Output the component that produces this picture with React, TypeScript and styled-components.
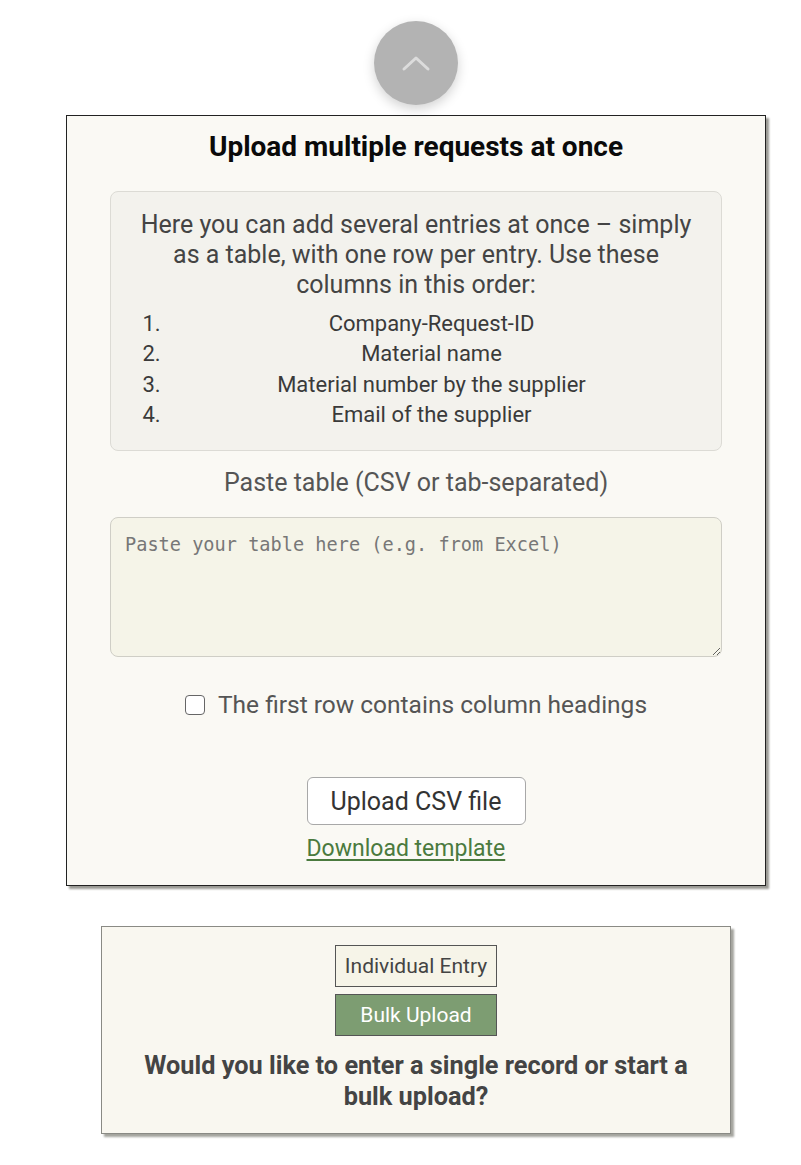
import React, { useState } from "react";
import styled, { createGlobalStyle } from "styled-components";

const GlobalStyle = createGlobalStyle`
  html, body {
    margin: 0;
    padding: 0;
    background: #ffffff;
    font-family: Roboto, "Liberation Sans", Arial, sans-serif;
  }
`;

const Page = styled.div`
  display: flex;
  flex-direction: column;
  align-items: center;
  padding: 21px 0 30px 31px;
`;

const ScrollTopButton = styled.button`
  width: 84px;
  height: 84px;
  border-radius: 50%;
  border: none;
  background: #b3b3b3;
  box-shadow: 0 4px 12px rgba(0, 0, 0, 0.18);
  display: flex;
  align-items: center;
  justify-content: center;
  padding: 0;
  cursor: pointer;
  position: relative;
  z-index: 1;
`;

const Card = styled.section`
  box-sizing: border-box;
  width: 700px;
  margin-top: 10px;
  padding: 16px 43px 23px;
  background: #faf9f4;
  border: 1px solid #222;
  box-shadow: 3px 3px 2px #9a9a94;
  display: flex;
  flex-direction: column;
  align-items: center;
`;

const Title = styled.h2`
  margin: 0 0 29px;
  font-size: 28px;
  line-height: 30px;
  font-weight: 700;
  color: #0a0a0a;
  text-align: center;
`;

const InfoBox = styled.div`
  box-sizing: border-box;
  width: 100%;
  padding: 18px 24px 20px;
  background: #f3f2ed;
  border: 1px solid #dcdbd5;
  border-radius: 8px;
  color: #444;
  text-align: center;
`;

const InfoText = styled.p`
  margin: 0 0 9px;
  font-size: 25px;
  line-height: 30px;
`;

const ColumnList = styled.ol`
  margin: 0;
  padding-left: 31px;
  font-size: 22px;
  line-height: 30.3px;
  color: #3a3a3a;
`;

const Label = styled.label`
  margin-top: 17px;
  font-size: 25px;
  line-height: 30px;
  color: #555;
`;

const PasteArea = styled.textarea`
  box-sizing: border-box;
  width: 100%;
  height: 140px;
  margin-top: 19px;
  padding: 15px 14px;
  background: #f5f4e8;
  border: 1px solid #cfcec6;
  border-radius: 8px;
  font-family: "DejaVu Sans Mono", "Liberation Mono", monospace;
  font-size: 18.6px;
  line-height: 24px;
  color: #333;
  resize: vertical;

  &::placeholder {
    color: #777;
  }
`;

const CheckRow = styled.label`
  margin-top: 33px;
  display: flex;
  align-items: center;
  gap: 13px;
  font-size: 24.5px;
  line-height: 30px;
  color: #555;
  cursor: pointer;
`;

const CheckBox = styled.input`
  width: 20px;
  height: 20px;
  margin: 0;
  appearance: none;
  border: 1.5px solid #666;
  border-radius: 4px;
  background: #fff;
  cursor: pointer;

  &:checked {
    background: #7d9d72;
  }
`;

const Actions = styled.div`
  margin-top: 57px;
  display: flex;
  flex-direction: column;
  align-items: flex-start;
  gap: 11px;
`;

const UploadButton = styled.button`
  width: 219px;
  height: 48px;
  background: #ffffff;
  border: 1px solid #a8a8a8;
  border-radius: 6px;
  font-family: inherit;
  font-size: 25px;
  color: #333;
  cursor: pointer;
`;

const TemplateLink = styled.a`
  font-size: 23px;
  line-height: 26px;
  color: #4a7a3e;
  text-decoration: underline;
  text-underline-offset: 3px;
`;

const ModeCard = styled.section`
  box-sizing: border-box;
  width: 630px;
  margin-top: 40px;
  padding: 18px 40px 21px;
  background: #f9f7f0;
  border: 1px solid #8a8a85;
  box-shadow: 3px 3px 2px #a4a49e;
  display: flex;
  flex-direction: column;
  align-items: center;
  gap: 7px;
`;

const ModeButton = styled.button<{ $active?: boolean }>`
  width: 162px;
  height: 42px;
  border: 1px solid #555;
  border-radius: 0;
  background: ${(p) => (p.$active ? "#7d9d72" : "#f6f4e8")};
  color: ${(p) => (p.$active ? "#ffffff" : "#444")};
  font-family: Roboto, "Liberation Sans", Arial, sans-serif;
  font-size: 21px;
  padding: 0;
  cursor: pointer;
`;

const Question = styled.h3`
  margin: 7px 0 0;
  font-size: 25.3px;
  line-height: 31px;
  font-weight: 700;
  color: #444;
  text-align: center;
`;

const columns = [
  "Company-Request-ID",
  "Material name",
  "Material number by the supplier",
  "Email of the supplier",
];

export default function App() {
  const [mode, setMode] = useState<"single" | "bulk">("bulk");
  const [hasHeader, setHasHeader] = useState(false);

  return (
    <Page>
      <GlobalStyle />
      <ScrollTopButton aria-label="Scroll to top">
        <svg width="30" height="20" viewBox="0 0 30 20">
          <path
            d="M3 16 L15 5 L27 16"
            fill="none"
            stroke="#dcdcdc"
            strokeWidth="3"
            strokeLinecap="round"
            strokeLinejoin="round"
          />
        </svg>
      </ScrollTopButton>

      <Card>
        <Title>Upload multiple requests at once</Title>
        <InfoBox>
          <InfoText>
            Here you can add several entries at once – simply as a table, with
            one row per entry. Use these columns in this order:
          </InfoText>
          <ColumnList>
            {columns.map((c) => (
              <li key={c}>{c}</li>
            ))}
          </ColumnList>
        </InfoBox>
        <Label htmlFor="paste">Paste table (CSV or tab-separated)</Label>
        <PasteArea id="paste" placeholder="Paste your table here (e.g. from Excel)" />
        <CheckRow>
          <CheckBox
            type="checkbox"
            checked={hasHeader}
            onChange={(e) => setHasHeader(e.target.checked)}
          />
          The first row contains column headings
        </CheckRow>
        <Actions>
          <UploadButton>Upload CSV file</UploadButton>
          <TemplateLink href="#">Download template</TemplateLink>
        </Actions>
      </Card>

      <ModeCard>
        <ModeButton $active={mode === "single"} onClick={() => setMode("single")}>
          Individual Entry
        </ModeButton>
        <ModeButton $active={mode === "bulk"} onClick={() => setMode("bulk")}>
          Bulk Upload
        </ModeButton>
        <Question>
          Would you like to enter a single record or start a bulk upload?
        </Question>
      </ModeCard>
    </Page>
  );
}
